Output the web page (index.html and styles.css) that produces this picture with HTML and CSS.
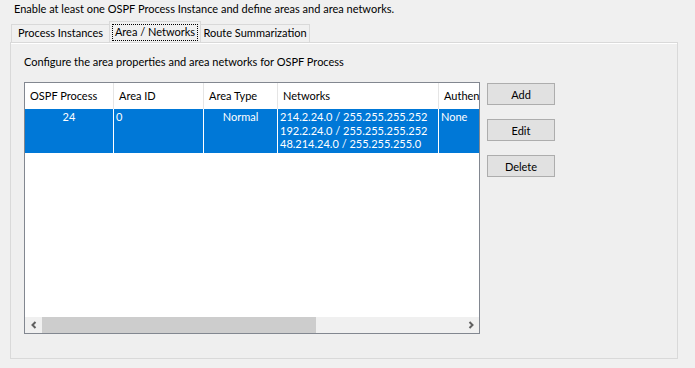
FILE: index.html
```html
<!DOCTYPE html>
<html lang="en">
<head>
    <meta charset="UTF-8">
    <title>OSPF Areas</title>
    <link rel="stylesheet" href="styles.css">
</head>
<body>
    <p class="intro">Enable at least one OSPF Process Instance and define areas and area networks.</p>
    <div class="tabs">
        <div class="tab tab-process">Process Instances</div>
        <div class="tab tab-area active"><span class="focus">Area / Networks</span></div>
        <div class="tab tab-route">Route Summarization</div>
    </div>
    <div class="panel">
        <p class="hint">Configure the area properties and area networks for OSPF Process</p>
        <div class="body">
            <div class="listview">
                <div class="grid head">
                    <div class="cell">OSPF Process</div>
                    <div class="cell">Area ID</div>
                    <div class="cell">Area Type</div>
                    <div class="cell">Networks</div>
                    <div class="cell last">Authen</div>
                </div>
                <div class="grid row selected">
                    <div class="cell center">24</div>
                    <div class="cell">0</div>
                    <div class="cell center">Normal</div>
                    <div class="cell">214.2.24.0 / 255.255.255.252<br>192.2.24.0 / 255.255.255.252<br>48.214.24.0 / 255.255.255.0</div>
                    <div class="cell last">None</div>
                </div>
                <div class="spacer"></div>
                <div class="hscroll">
                    <span class="arrow">
                        <svg width="8" height="8" viewBox="0 0 8 8"><path d="M5.5 1 L2.5 4 L5.5 7" fill="none" stroke="#606060" stroke-width="2"/></svg>
                    </span>
                    <span class="thumb"></span>
                    <span class="track"></span>
                    <span class="arrow">
                        <svg width="8" height="8" viewBox="0 0 8 8"><path d="M2.5 1 L5.5 4 L2.5 7" fill="none" stroke="#606060" stroke-width="2"/></svg>
                    </span>
                </div>
            </div>
            <div class="buttons">
                <button>Add</button>
                <button>Edit</button>
                <button>Delete</button>
            </div>
        </div>
    </div>
</body>
</html>
```

FILE: styles.css
```css
body {
    margin: 0;
    background-color: #f0f0f0;
    font-family: Lato, "Noto Sans", sans-serif;
    font-size: 11px;
    color: #000;
}
p {
    margin: 0;
}
.intro {
    padding: 1px 0 0 14px;
    height: 20px;
    line-height: 16px;
}
.tabs {
    display: flex;
    align-items: flex-end;
    height: 21px;
    margin-left: 11px;
}
.tab {
    height: 17px;
    line-height: 16px;
    text-align: center;
    border: 1px solid #d9d9d9;
    border-bottom: none;
    background-color: #f0f0f0;
    box-sizing: content-box;
}
.tab-process {
    width: 97px;
}
.tab-area {
    width: 90px;
}
.tab-route {
    width: 108px;
}
.tab.active {
    height: 20px;
    margin: 0 -1px;
    position: relative;
    z-index: 1;
}
.focus {
    display: block;
    margin: 2px 2px 0;
    height: 15px;
    line-height: 14px;
    border: 1px dotted #000;
    white-space: nowrap;
}
.panel {
    width: 668px;
    height: 317px;
    margin-left: 10px;
    border: 1px solid #d9d9d9;
    box-shadow: inset 0 1px #fff;
    background-color: #efefef;
    padding: 0 0 0 13px;
    box-sizing: border-box;
}
.hint {
    padding-top: 11px;
    height: 28px;
    line-height: 16px;
    box-sizing: border-box;
    margin-bottom: 11px;
}
.body {
    display: flex;
    gap: 7px;
}
.listview {
    width: 456px;
    height: 252px;
    box-sizing: border-box;
    border: 1px solid #828790;
    background-color: #fff;
    display: flex;
    flex-direction: column;
    overflow: hidden;
}
.grid {
    display: grid;
    grid-template-columns: 89px 90px 74px 161px 40px;
}
.head {
    height: 26px;
}
.head .cell {
    padding-left: 5px;
    line-height: 26px;
    border-right: 1px solid #e5e5e5;
}
.row {
    height: 44px;
}
.row .cell {
    padding: 1px 0 0 2px;
    line-height: 13.5px;
    border-right: 1px solid #fff;
}
.cell {
    white-space: nowrap;
    overflow: hidden;
}
.cell.last {
    border-right: none;
}
.cell.center {
    text-align: center;
    padding-left: 0;
}
.selected {
    background-color: #0078d7;
    color: #fff;
}
.spacer {
    flex: 1;
}
.hscroll {
    height: 16px;
    display: flex;
    background-color: #f0f0f0;
}
.arrow {
    width: 17px;
    display: flex;
    align-items: center;
    justify-content: center;
}
.thumb {
    width: 274px;
    background-color: #cdcdcd;
}
.track {
    flex: 1;
}
.buttons {
    display: flex;
    flex-direction: column;
    gap: 14px;
    padding-top: 1px;
}
button {
    width: 68px;
    height: 22px;
    padding: 0;
    border: 1px solid #adadad;
    background-color: #e1e1e1;
    font-family: inherit;
    font-size: 11px;
    color: #000;
}
```
